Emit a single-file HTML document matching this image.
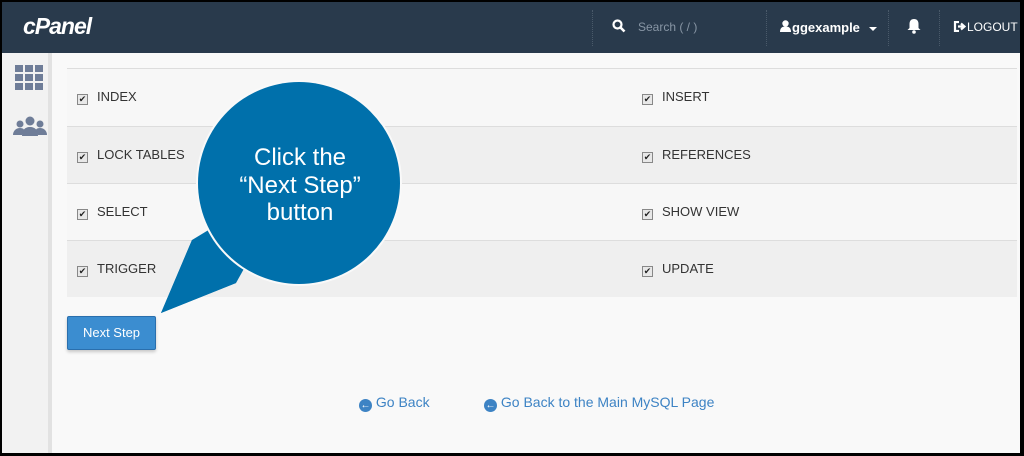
<!DOCTYPE html>
<html><head><meta charset="utf-8"><style>
*{margin:0;padding:0;box-sizing:border-box}
body{width:1024px;height:456px;overflow:hidden;background:#000;font-family:"Liberation Sans",sans-serif;position:relative}
#frame{position:absolute;left:2px;top:2px;width:1018px;height:451px;background:#f9f9f9;overflow:hidden}
.hdr{position:absolute;left:0;top:0;width:1018px;height:51px;background:#293a4c;color:#fff}
.side{position:absolute;left:0;top:51px;width:50px;height:400px;background:#f2f2f2;border-right:4px solid #e2e2e2}
.row{position:absolute;left:65px;width:950px;height:57px;font-size:13px;color:#333}
.row span{position:absolute;top:20px}
.cb{display:inline-block;width:11px;height:11px;border:1px solid #888;background:#e8e8e8;font-size:9px;line-height:9px;text-align:center;color:#222;margin-right:9px;vertical-align:-1px;font-style:normal}
.sep{position:absolute;top:0;height:36px;border-left:1px dotted #4a5a6a}
</style></head><body><div id="frame">
<div class="hdr">
<div style="position:absolute;left:21px;top:11px;font-size:23px;font-weight:bold;font-style:italic;letter-spacing:-1px">cPanel</div>
<div class="sep" style="left:590px;top:8px"></div>
<div class="sep" style="left:764px;top:8px"></div>
<div class="sep" style="left:886px;top:8px"></div>
<div class="sep" style="left:937px;top:8px"></div>
<svg style="position:absolute;left:610px;top:17px" width="14" height="14" viewBox="0 0 14 14"><circle cx="5.5" cy="5.5" r="4" fill="none" stroke="#fff" stroke-width="2.2"/><path d="M8.5 8.5l4 4" stroke="#fff" stroke-width="2.6"/></svg>
<div style="position:absolute;left:636px;top:18px;font-size:12px;color:#8896a5">Search ( / )</div>
<svg style="position:absolute;left:778px;top:18px" width="11" height="12" viewBox="0 0 11 12"><circle cx="5.5" cy="3.5" r="3.2" fill="#fff"/><path d="M0 12c0-4 2-5.5 5.5-5.5S11 8 11 12z" fill="#fff"/></svg>
<div style="position:absolute;left:790px;top:18px;font-size:13px;font-weight:bold">ggexample</div>
<div style="position:absolute;left:867px;top:25px;border:4px solid transparent;border-top:4px solid #fff"></div>
<svg style="position:absolute;left:905px;top:16px" width="14" height="16" viewBox="0 0 14 16"><path d="M7 1c3 0 4.5 2 4.5 5v4l2 2H.5l2-2V6C2.5 3 4 1 7 1z" fill="#fff"/><circle cx="7" cy="14" r="1.8" fill="#fff"/></svg>
<svg style="position:absolute;left:951px;top:19px" width="13" height="11" viewBox="0 0 13 11"><path d="M6 1H2v9h4" fill="none" stroke="#fff" stroke-width="2.2"/><path d="M5 5.5h5M8 2.5l3.5 3-3.5 3" fill="none" stroke="#fff" stroke-width="2.2"/></svg>
<div style="position:absolute;left:965px;top:18px;font-size:12px">LOGOUT</div>
</div>
<div class="side">
<svg style="position:absolute;left:13px;top:12px" width="30" height="26" viewBox="0 0 30 26"><g fill="#6f7d98"><rect x="0" y="0" width="8" height="7"/><rect x="10" y="0" width="8" height="7"/><rect x="20" y="0" width="8" height="7"/><rect x="0" y="9" width="8" height="7"/><rect x="10" y="9" width="8" height="7"/><rect x="20" y="9" width="8" height="7"/><rect x="0" y="18" width="8" height="7"/><rect x="10" y="18" width="8" height="7"/><rect x="20" y="18" width="8" height="7"/></g></svg>
<svg style="position:absolute;left:10px;top:63px" width="36" height="20" viewBox="0 0 36 20"><g fill="#6f7d98"><circle cx="18" cy="5" r="4.5"/><circle cx="8" cy="8" r="3.5"/><circle cx="28" cy="8" r="3.5"/><path d="M10 20c0-6 3-9 8-9s8 3 8 9z"/><path d="M1 19c0-4 3-7 7-7s4 2 4 2l-2 5z"/><path d="M35 19c0-4-3-7-7-7s-4 2-4 2l2 5z"/></g></svg>
</div>
<div style="position:absolute;left:65px;top:66px;width:950px;height:1px;background:#ddd"></div>
<div class="row" style="top:67px;background:#f7f7f7"><span style="left:10px"><i class="cb">✔</i>INDEX</span><span style="left:575px"><i class="cb">✔</i>INSERT</span></div>
<div class="row" style="top:124px;background:#efefef;border-top:1px solid #ddd"><span style="left:10px"><i class="cb">✔</i>LOCK TABLES</span><span style="left:575px"><i class="cb">✔</i>REFERENCES</span></div>
<div class="row" style="top:181px;background:#f7f7f7;border-top:1px solid #ddd"><span style="left:10px"><i class="cb">✔</i>SELECT</span><span style="left:575px"><i class="cb">✔</i>SHOW VIEW</span></div>
<div class="row" style="top:238px;background:#efefef;border-top:1px solid #ddd"><span style="left:10px"><i class="cb">✔</i>TRIGGER</span><span style="left:575px"><i class="cb">✔</i>UPDATE</span></div>
<div style="position:absolute;left:65px;top:314px;width:89px;height:34px;background:#3b8dd0;border:1px solid #2a6fad;border-radius:2px;color:#fff;font-size:13px;text-align:center;line-height:32px;box-shadow:0 2px 3px rgba(0,0,0,.2)">Next Step</div>
<div style="position:absolute;left:357px;top:392px;font-size:14px;color:#3d83c4"><span style="display:inline-block;width:13px;height:13px;border-radius:50%;background:#3d83c4;color:#fff;font-size:10px;line-height:13px;text-align:center;vertical-align:-1px">&#8592;</span> Go Back</div>
<div style="position:absolute;left:482px;top:392px;font-size:14px;color:#3d83c4"><span style="display:inline-block;width:13px;height:13px;border-radius:50%;background:#3d83c4;color:#fff;font-size:10px;line-height:13px;text-align:center;vertical-align:-1px">&#8592;</span> Go Back to the Main MySQL Page</div>
<svg style="position:absolute;left:-2px;top:-2px" width="1024" height="456">
<polygon points="192,240 161,313 236,283 260,240 225,220" fill="#0070ab"/>
<circle cx="299" cy="183" r="103" fill="#f9f9f9"/>
<polygon points="192,240 161,313 236,283 228,272 203,252" fill="#0070ab"/>
<circle cx="299" cy="183" r="101" fill="#0070ab"/>
<g fill="#fff" font-family="Liberation Sans, sans-serif" font-size="24" text-anchor="middle"><text x="300" y="165">Click the</text><text x="300" y="193">“Next Step”</text><text x="300" y="220">button</text></g>
</svg>
</div></body></html>
